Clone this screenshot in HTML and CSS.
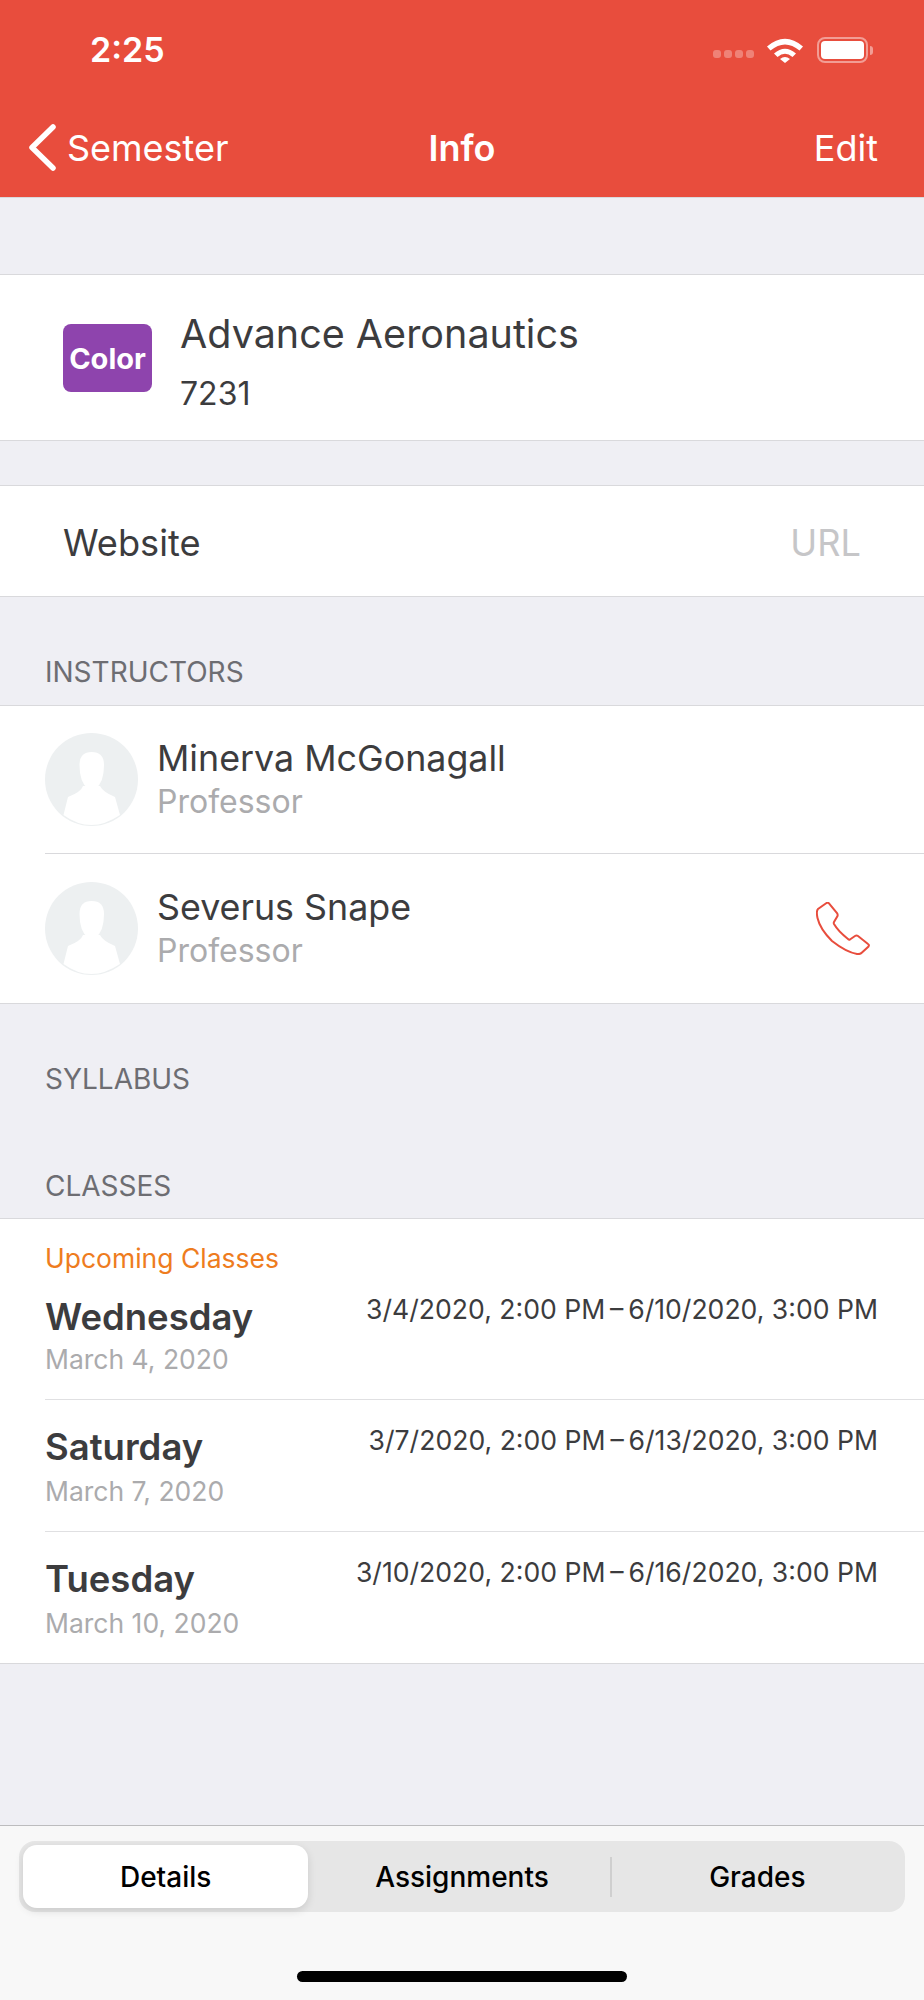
FILE: index.html
```html
<!DOCTYPE html>
<html lang="en">
<head>
    <meta charset="UTF-8">
    <meta name="viewport" content="width=device-width, initial-scale=1.0">
    <title>Info</title>
    <link rel="stylesheet" href="styles.css">
</head>
<body>
    <header class="top">
        <div class="status">
            <span class="clock">2:25</span>
            <div class="status-icons">
                <div class="signal"><i></i><i></i><i></i><i></i></div>
                <svg class="wifi" viewBox="0 0 36 26" width="36" height="26">
                    <path d="M0 9.5 Q18 -6 36 9.5 L32.5 13.5 Q18 1.5 3.5 13.5 Z" fill="#fff"/>
                    <path d="M7 16.5 Q18 7 29 16.5 L25.5 20 Q18 13.5 10.5 20 Z" fill="#fff"/>
                    <path d="M13 22 Q18 18 23 22 L18 26 Z" fill="#fff"/>
                </svg>
                <div class="battery"><div class="battery-fill"></div></div>
                <div class="battery-cap"></div>
            </div>
        </div>
        <nav class="nav">
            <a class="back">
                <svg viewBox="0 0 28 47" width="28" height="47">
                    <path d="M25 3 L4 23.5 L25 44" fill="none" stroke="#fff" stroke-width="5.5" stroke-linecap="round" stroke-linejoin="round"/>
                </svg>
                <span>Semester</span>
            </a>
            <span class="nav-title">Info</span>
            <a class="nav-edit">Edit</a>
        </nav>
    </header>

    <main class="content">
        <section class="card course">
            <div class="swatch">Color</div>
            <div class="course-text">
                <div class="course-name">Advance Aeronautics</div>
                <div class="course-code">7231</div>
            </div>
        </section>

        <section class="card website">
            <span>Website</span>
            <span class="placeholder">URL</span>
        </section>

        <h2 class="label label-instructors">INSTRUCTORS</h2>
        <section class="card">
            <div class="person">
                <svg class="avatar" viewBox="0 0 93 93" width="93" height="93">
                    <circle cx="46.5" cy="46.5" r="46.5" fill="#edf0f1"/>
                    <path d="M18.5 82 L23 64 Q36 59 38 53 L55 53 Q58 59 70 64 L75 82 Q60 92 46.5 92 Q32 92 18.5 82 Z" fill="#fff"/>
                    <path d="M34.5 32 Q34.5 19 46.7 19 Q59 19 59 32 Q59 49 50.5 56 Q46.7 59 43 56 Q34.5 49 34.5 32 Z" fill="#fff"/>
                </svg>
                <div class="person-text">
                    <div class="person-name">Minerva McGonagall</div>
                    <div class="person-role">Professor</div>
                </div>
            </div>
            <div class="person">
                <svg class="avatar" viewBox="0 0 93 93" width="93" height="93">
                    <circle cx="46.5" cy="46.5" r="46.5" fill="#edf0f1"/>
                    <path d="M18.5 82 L23 64 Q36 59 38 53 L55 53 Q58 59 70 64 L75 82 Q60 92 46.5 92 Q32 92 18.5 82 Z" fill="#fff"/>
                    <path d="M34.5 32 Q34.5 19 46.7 19 Q59 19 59 32 Q59 49 50.5 56 Q46.7 59 43 56 Q34.5 49 34.5 32 Z" fill="#fff"/>
                </svg>
                <div class="person-text">
                    <div class="person-name">Severus Snape</div>
                    <div class="person-role">Professor</div>
                </div>
                <svg class="phone" viewBox="0 0 54 53" width="54" height="53">
                    <path d="M10.5 1 L2 7 Q0 9 1.5 16 Q4 27 16 39 Q30 50 41 52 Q44 52.5 46 50.5 L52.5 44.5 Q53.5 43 52 42 L42 34 Q40.5 33 39 34 L34 37.5 Q33 38 32 37 Q22 29 18 22 Q17.5 21 18 20 L21.5 14 Q22 12.5 21 11 L13 1.5 Q12 0 10.5 1 Z" fill="none" stroke="#e84d3d" stroke-width="2"/>
                </svg>
            </div>
        </section>

        <h2 class="label label-syllabus">SYLLABUS</h2>
        <h2 class="label label-classes">CLASSES</h2>
        <section class="card">
            <div class="class-row first">
                <div class="upcoming">Upcoming Classes</div>
                <div class="class-line">
                    <div>
                        <div class="class-day">Wednesday</div>
                        <div class="class-date">March 4, 2020</div>
                    </div>
                    <div class="class-time">3/4/2020, 2:00 PM&#8201;–&#8201;6/10/2020, 3:00 PM</div>
                </div>
            </div>
            <div class="class-row">
                <div class="class-line">
                    <div>
                        <div class="class-day">Saturday</div>
                        <div class="class-date">March 7, 2020</div>
                    </div>
                    <div class="class-time">3/7/2020, 2:00 PM&#8201;–&#8201;6/13/2020, 3:00 PM</div>
                </div>
            </div>
            <div class="class-row">
                <div class="class-line">
                    <div>
                        <div class="class-day">Tuesday</div>
                        <div class="class-date">March 10, 2020</div>
                    </div>
                    <div class="class-time">3/10/2020, 2:00 PM&#8201;–&#8201;6/16/2020, 3:00 PM</div>
                </div>
            </div>
        </section>
    </main>

    <footer class="bottom">
        <div class="segments">
            <div class="segment active">Details</div>
            <div class="segment">Assignments</div>
            <div class="segment split">Grades</div>
        </div>
        <div class="home-bar"></div>
    </footer>
</body>
</html>
```

FILE: styles.css
```css
* {
    margin: 0;
    padding: 0;
    box-sizing: border-box;
}

body {
    width: 924px;
    height: 2000px;
    display: flex;
    flex-direction: column;
    background-color: #efeff4;
    color: #3c3c3e;
    font-family: Inter, "Liberation Sans", sans-serif;
    overflow: hidden;
}

/* header */
.top {
    height: 198px;
    background-color: #e84d3d;
    color: #fff;
    border-bottom: 1px solid #d9d9dc;
}

.status {
    height: 100px;
    display: flex;
    justify-content: space-between;
    align-items: flex-start;
    padding: 31px 51px 0 90px;
}

.clock {
    font-size: 34px;
    line-height: 38px;
    font-weight: 600;
}

.status-icons {
    display: flex;
    align-items: center;
    padding-top: 6px;
}

.signal {
    display: flex;
    gap: 3px;
    margin-right: 13px;
    padding-top: 8px;
}

.signal i {
    width: 8px;
    height: 8px;
    border-radius: 3px;
    background-color: rgba(255, 255, 255, 0.3);
}

.wifi {
    margin-right: 14px;
}

.battery {
    width: 51px;
    height: 26px;
    padding: 2px;
    border: 2px solid rgba(255, 255, 255, 0.45);
    border-radius: 8px;
}

.battery-fill {
    width: 100%;
    height: 100%;
    background-color: #fff;
    border-radius: 4px;
}

.battery-cap {
    width: 3px;
    height: 9px;
    margin-left: 2px;
    background-color: rgba(255, 255, 255, 0.45);
    border-radius: 0 3px 3px 0;
}

.nav {
    display: grid;
    grid-template-columns: 1fr auto 1fr;
    align-items: center;
    height: 47px;
    margin-top: 24px;
    padding: 0 46px;
    font-size: 36px;
}

.back {
    display: flex;
    align-items: center;
    gap: 11px;
    margin-left: -18px;
}

.nav-title {
    font-weight: 600;
}

.nav-edit {
    justify-self: end;
}

/* cards */
.content {
    flex: 1;
    padding-top: 76px;
}

.card {
    background-color: #fff;
    border-top: 1px solid #d9d9dc;
    border-bottom: 1px solid #d9d9dc;
}

.course {
    height: 167px;
    display: flex;
    padding: 49px 0 0 63px;
}

.swatch {
    width: 89px;
    height: 68px;
    display: flex;
    align-items: center;
    justify-content: center;
    background-color: #8e44ad;
    border-radius: 8px;
    color: #fff;
    font-size: 29px;
    font-weight: 700;
}

.course-text {
    margin: -13px 0 0 28px;
}

.course-name {
    font-size: 39.5px;
    line-height: 46px;
}

.course-code {
    margin-top: 18px;
    font-size: 32px;
    line-height: 38px;
}

.website {
    height: 112px;
    margin-top: 44px;
    display: flex;
    justify-content: space-between;
    align-items: center;
    padding: 3px 63px 0;
    font-size: 36.2px;
}

.placeholder {
    color: #c6c6c8;
}

.label {
    padding-left: 45px;
    font-size: 28px;
    font-weight: 400;
    line-height: 32px;
    color: #6d6d72;
}

.label-instructors {
    margin-top: 59px;
    margin-bottom: 17px;
}

.label-syllabus {
    margin-top: 59px;
}

.label-classes {
    margin-top: 75px;
    margin-bottom: 16px;
}

/* people */
.person {
    height: 148px;
    margin-left: 45px;
    display: flex;
    align-items: center;
    padding-right: 54px;
    border-bottom: 1px solid #d9d9dc;
}

.person:last-child {
    height: 149px;
    border-bottom: none;
}

.avatar {
    flex: none;
}

.person-text {
    flex: 1;
    margin: -2px 0 0 19px;
}

.person-name {
    font-size: 35.8px;
    line-height: 44px;
}

.person-role {
    margin-top: 2px;
    font-size: 32px;
    line-height: 40px;
    color: #ababad;
}

/* classes */
.class-row {
    height: 132px;
    margin-left: 45px;
    padding: 25px 46px 0 0;
    border-bottom: 1px solid #e0e0e2;
}

.class-row.first {
    height: 181px;
    padding-top: 24px;
}

.class-row:last-child {
    height: 131px;
    border-bottom: none;
}

.upcoming {
    margin-bottom: 22px;
    font-size: 26.5px;
    line-height: 30px;
    color: #ee7c1e;
}

.class-line {
    display: flex;
    justify-content: space-between;
}

.class-day {
    font-size: 36.5px;
    line-height: 44px;
    font-weight: 600;
}

.class-date {
    margin-top: 5px;
    font-size: 26.5px;
    line-height: 34px;
    color: #ababad;
}

.first .class-date {
    margin-top: 3px;
}

.class-time {
    margin-top: -1px;
    font-size: 26.6px;
    line-height: 32px;
}

.first .class-time {
    margin-top: -2px;
}

/* bottom tabs */
.bottom {
    height: 175px;
    background-color: #f8f8f8;
    border-top: 1px solid #bcbcbe;
    padding: 15px 19px 0;
}

.segments {
    height: 71px;
    display: grid;
    grid-template-columns: repeat(3, 1fr);
    background-color: #e6e6e6;
    border-radius: 16px;
}

.segment {
    display: flex;
    align-items: center;
    justify-content: center;
    color: #000;
    font-size: 28px;
    font-weight: 500;
}

.segment.active {
    margin: 4px 6px 4px 4px;
    background-color: #fff;
    border-radius: 14px;
    box-shadow: 0 3px 8px rgba(0, 0, 0, 0.12);
}

.segment.split {
    background: linear-gradient(#cfcfcf, #cfcfcf) left center / 2px 40px no-repeat;
}

.home-bar {
    width: 330px;
    height: 11px;
    margin: 59px auto 0;
    background-color: #000;
    border-radius: 6px;
}
```
